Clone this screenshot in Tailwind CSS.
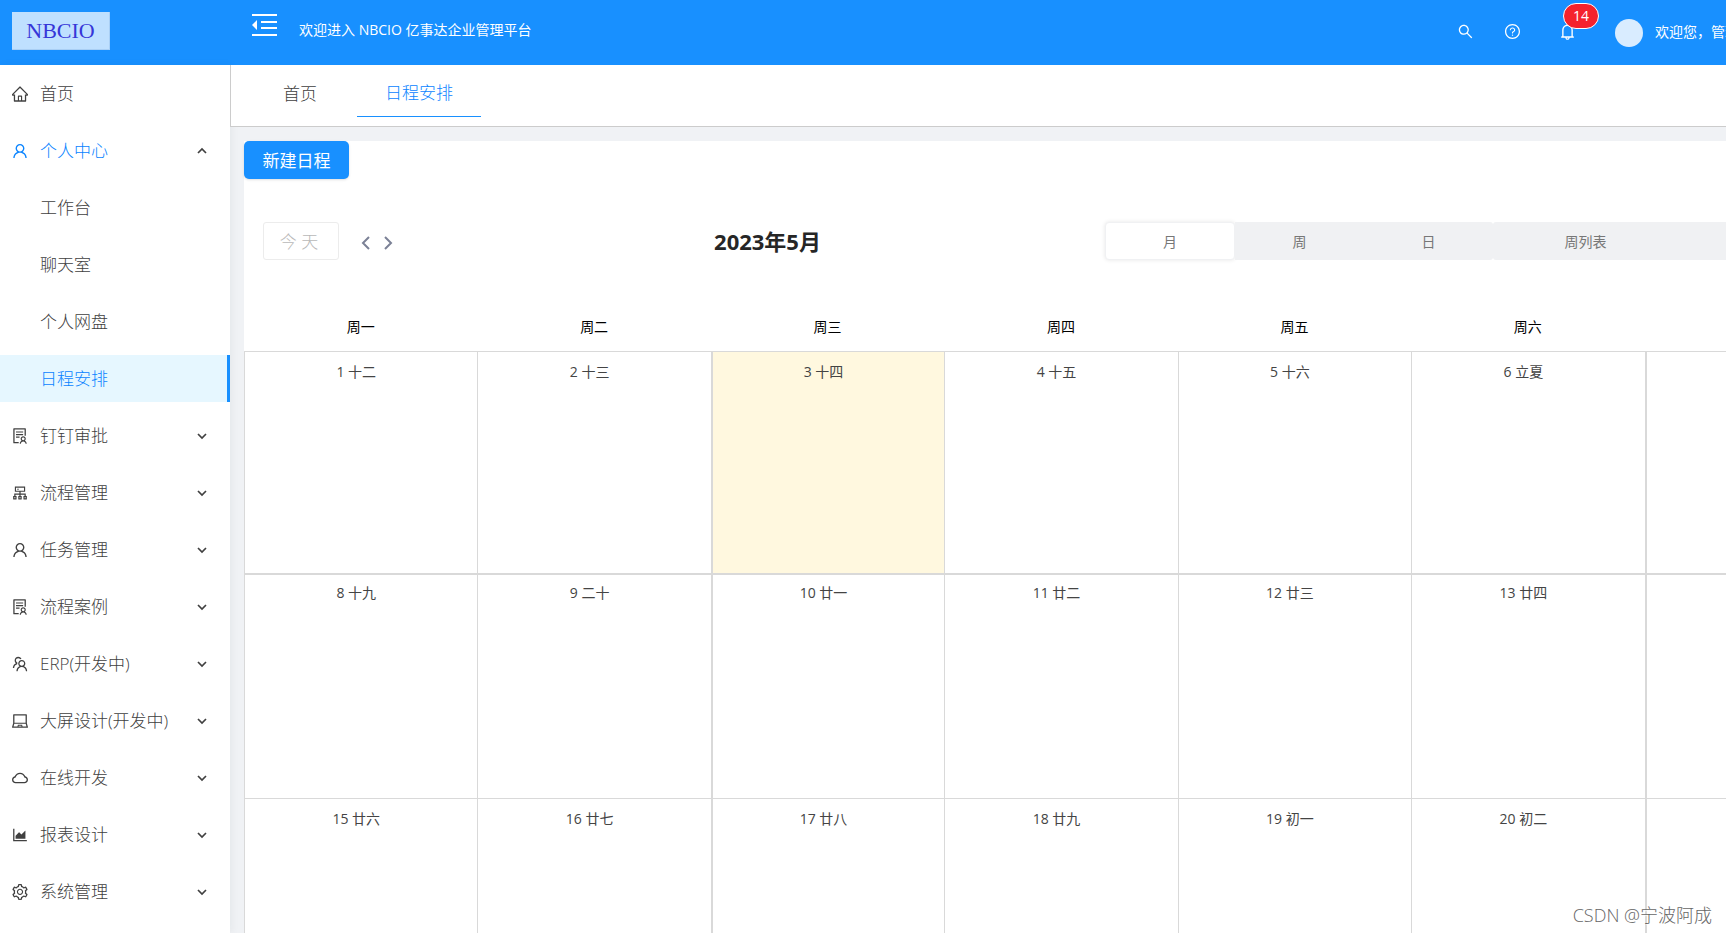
<!DOCTYPE html>
<html lang="zh-CN">
<head>
<meta charset="utf-8">
<title>NBCIO 亿事达企业管理平台</title>
<script src="https://cdn.jsdelivr.net/npm/@tailwindcss/browser@4"></script>
</head>
<body class="relative flex h-screen flex-col overflow-hidden bg-[#f0f2f5] font-['Open_Sans','Noto_Sans_CJK_SC',sans-serif] text-sm text-[#595959]">

<svg class="hidden" aria-hidden="true">
  <symbol id="home" viewBox="64 64 896 896"><path d="M946.5 505L534.6 93.4a31.93 31.93 0 0 0-45.2 0L77.5 505c-12 12-18.8 28.3-18.8 45.3 0 35.3 28.7 64 64 64h43.4V908c0 17.7 14.3 32 32 32h627.800c17.700 0 32-14.300 32-32V614.300h43.400c17 0 33.300-6.700 45.300-18.800 24.900-25 24.900-65.500-.1-90.500zM568 868H456V664h112v204zm217.900-325.700V868H632V640c0-22.100-17.900-40-40-40H432c-22.100 0-40 17.900-40 40v228H238.100V542.300h-96l370-369.700 369.900 369.700h-96.100z"/></symbol>
  <symbol id="user" viewBox="64 64 896 896"><path d="M858.5 763.6a374 374 0 0 0-80.6-119.5 375.63 375.63 0 0 0-119.5-80.6c-.4-.2-.8-.3-1.2-.5C719.5 518 760 444.7 760 362c0-137-111-248-248-248S264 225 264 362c0 82.7 40.5 156 102.8 201.1-.4.2-.8.3-1.2.5-44.8 18.9-85 46-119.5 80.6a375.63 375.63 0 0 0-80.6 119.5A371.7 371.7 0 0 0 136 901.800a8 8 0 0 0 8 8.200h60c4.400 0 7.900-3.500 8-7.800 2-77.200 33-149.500 87.800-204.300 56.700-56.700 132-87.900 212.200-87.900s155.500 31.200 212.200 87.900C779 752.700 810 825 812 902.200c.1 4.400 3.600 7.800 8 7.800h60a8 8 0 0 0 8-8.200c-1-47.800-10.900-94.300-29.500-138.200zM512 534c-45.900 0-89.100-17.900-121.600-50.400S340 407.900 340 362c0-45.900 17.900-89.100 50.400-121.600S466.100 190 512 190s89.100 17.900 121.600 50.400S684 316.100 684 362c0 45.900-17.900 89.100-50.400 121.600S557.900 534 512 534z"/></symbol>
  <symbol id="solution" viewBox="64 64 896 896"><path d="M688 264c0-4.400-3.600-8-8-8H296c-4.400 0-8 3.600-8 8v48c0 4.400 3.600 8 8 8h384c4.400 0 8-3.600 8-8v-48zm-8 136H296c-4.400 0-8 3.600-8 8v48c0 4.400 3.600 8 8 8h384c4.400 0 8-3.600 8-8v-48c0-4.400-3.600-8-8-8zM480 544H296c-4.400 0-8 3.600-8 8v48c0 4.400 3.600 8 8 8h184c4.400 0 8-3.600 8-8v-48c0-4.400-3.600-8-8-8zm-48 308H208V148h560v344c0 4.400 3.600 8 8 8h56c4.400 0 8-3.600 8-8V108c0-17.700-14.300-32-32-32H168c-17.700 0-32 14.300-32 32v784c0 17.700 14.300 32 32 32h264c4.400 0 8-3.600 8-8v-56c0-4.400-3.600-8-8-8zm356.800-74.400c29-26.300 47.200-64.300 47.200-106.600 0-79.500-64.500-144-144-144s-144 64.500-144 144c0 42.300 18.200 80.300 47.200 106.600-57 32.500-96.200 92.700-99.200 162.100-.2 4.500 3.500 8.300 8 8.300h48.100c4.200 0 7.700-3.300 8-7.600C564 871.200 621.700 816 692 816s128 55.200 131.900 124.400c.2 4.200 3.700 7.600 8 7.600H880c4.600 0 8.200-3.800 8-8.300-2.900-69.500-42.200-129.600-99.200-162.100zM692 591c44.200 0 80 35.800 80 80s-35.800 80-80 80-80-35.800-80-80 35.800-80 80-80z"/></symbol>
  <symbol id="cluster" viewBox="64 64 896 896"><path d="M888 680h-54V540H546v-92h238c8.800 0 16-7.200 16-16V168c0-8.800-7.200-16-16-16H240c-8.800 0-16 7.200-16 16v264c0 8.800 7.200 16 16 16h238v92H190v140h-54c-4.400 0-8 3.600-8 8v176c0 4.400 3.600 8 8 8h176c4.400 0 8-3.600 8-8V688c0-4.400-3.600-8-8-8h-54v-72h220v72h-54c-4.400 0-8 3.600-8 8v176c0 4.400 3.600 8 8 8h176c4.400 0 8-3.600 8-8V688c0-4.400-3.600-8-8-8h-54v-72h220v72h-54c-4.400 0-8 3.600-8 8v176c0 4.400 3.600 8 8 8h176c4.400 0 8-3.600 8-8V688c0-4.400-3.600-8-8-8zM256 808h-64v-64h64v64zm288 0h-64v-64h64v64zM288 384V216h448v168H288zm544 424h-64v-64h64v64zM360 300a40 40 0 1 0 80 0 40 40 0 1 0-80 0z"/></symbol>
  <symbol id="team" viewBox="64 64 896 896"><path d="M824.2 699.9a301.55 301.55 0 0 0-86.4-60.4C783.1 602.8 812 546.8 812 484c0-110.8-92.4-201.7-203.2-200-109.1 1.7-197 90.6-197 200 0 62.8 29 118.8 74.2 155.5a300.95 300.95 0 0 0-86.4 60.4C345 754.6 314 826.8 312 903.8a8 8 0 0 0 8 8.2h56c4.3 0 7.9-3.4 8-7.7 1.900-58 25.400-112.300 66.700-153.500A226.620 226.620 0 0 1 612 684c60.900 0 118.200 23.700 161.300 66.800C814.600 792 838 846.300 840 904.300c.1 4.300 3.700 7.700 8 7.700h56a8 8 0 0 0 8-8.200c-2-77-33-149.200-87.800-203.900zM612 612c-34.200 0-66.400-13.300-90.500-37.500a126.860 126.860 0 0 1-37.500-91.800c.3-32.800 13.400-64.500 36.300-88 24-24.600 56.100-38.300 90.400-38.700 33.900-.3 66.800 12.900 91 36.600 24.800 24.300 38.400 56.800 38.400 91.400 0 34.200-13.300 66.300-37.500 90.500A127.300 127.300 0 0 1 612 612zM361.500 510.400c-.9-8.700-1.400-17.500-1.400-26.400 0-15.900 1.500-31.400 4.300-46.500.7-3.600-1.200-7.300-4.500-8.800-13.600-6.100-26.100-14.500-36.900-25.100a127.540 127.540 0 0 1-38.700-95.400c.9-32.100 13.800-62.600 36.300-85.600 24.700-25.300 57.900-39.100 93.200-38.700 31.900.3 62.700 12.600 86 34.400 7.900 7.400 14.700 15.600 20.400 24.400 2 3.100 5.900 4.400 9.300 3.200 17.600-6.100 36.200-10.400 55.300-12.400 5.600-.6 8.800-6.600 6.300-11.600-32.500-64.300-98.900-108.700-175.700-109.900-110.900-1.700-203.300 89.200-203.300 199.900 0 62.800 28.900 118.800 74.200 155.500-31.800 14.700-61.100 35-86.500 60.400-54.800 54.700-85.800 126.900-87.800 204a8 8 0 0 0 8 8.200h56.100c4.300 0 7.900-3.400 8-7.700 1.900-58 25.400-112.300 66.700-153.500 29.400-29.400 65.400-49.800 104.700-59.700 3.900-1 6.500-4.700 6-8.700z"/></symbol>
  <symbol id="laptop" viewBox="64 64 896 896"><path d="M956.900 845.100L896.400 632V168c0-17.700-14.300-32-32-32h-704c-17.700 0-32 14.300-32 32v464L67.900 845.100C60.400 866 75.800 888 98 888h828.800c22.200 0 37.600-22 30.100-42.900zM200.400 208h624v395h-624V208zm228.300 608l8.100-37h150.300l8.100 37H428.700zm224 0l-19.100-86.700c-.8-3.700-4.100-6.300-7.800-6.300H398.200c-3.800 0-7 2.600-7.800 6.300L371.300 816H151l42.300-149h638.200l42.300 149H652.700z"/></symbol>
  <symbol id="cloud" viewBox="64 64 896 896"><path d="M811.400 418.700C765.600 297.900 648.900 212 512.200 212S258.800 297.800 213 418.600C127.300 441.100 64 519.100 64 612c0 110.500 89.500 200 199.900 200h496.200C870.500 812 960 722.500 960 612c0-92.700-63.100-170.700-148.600-193.300zm36.300 281a123.070 123.070 0 0 1-87.600 36.300H263.900c-33.100 0-64.200-12.900-87.600-36.300A123.300 123.300 0 0 1 140 612c0-28 9.100-54.300 26.200-76.300a125.700 125.700 0 0 1 66.100-43.700l37.900-9.900 13.900-36.600c8.600-22.800 20.600-44.100 35.700-63.400a245.600 245.600 0 0 1 52.400-49.900c41.100-28.900 89.500-44.200 140-44.200s98.900 15.300 140 44.200c19.900 14 37.500 30.800 52.400 49.900 15.100 19.300 27.100 40.700 35.700 63.400l13.800 36.500 37.800 10c54.300 14.500 92.100 63.800 92.100 120 0 33.100-12.900 64.300-36.300 87.700z"/></symbol>
  <symbol id="area" viewBox="64 64 896 896"><path d="M888 792H200V168c0-4.400-3.600-8-8-8h-56c-4.400 0-8 3.600-8 8v688c0 4.400 3.600 8 8 8h752c4.400 0 8-3.600 8-8v-56c0-4.400-3.600-8-8-8zm-616-64h536c4.400 0 8-3.600 8-8V284c0-7.200-8.700-10.700-13.700-5.700L592 488.600l-125.400-124a8.030 8.030 0 0 0-11.300 0l-189 189.600a7.870 7.870 0 0 0-2.300 5.600V720c0 4.400 3.600 8 8 8z"/></symbol>
  <symbol id="setting" viewBox="64 64 896 896"><path d="M924.8 625.7l-65.5-56c3.1-19 4.7-38.4 4.7-57.8s-1.6-38.8-4.7-57.8l65.5-56a32.03 32.03 0 0 0 9.3-35.2l-.9-2.6a443.74 443.74 0 0 0-79.7-137.9l-1.8-2.1a32.12 32.12 0 0 0-35.1-9.5l-81.3 28.9c-30-24.6-63.5-44-99.7-57.6l-15.7-85a32.05 32.05 0 0 0-25.8-25.7l-2.7-.5c-52.1-9.4-106.9-9.4-159 0l-2.7.5a32.05 32.05 0 0 0-25.8 25.7l-15.8 85.4a351.86 351.86 0 0 0-99 57.4l-81.9-29.1a32 32 0 0 0-35.1 9.5l-1.8 2.1a446.02 446.02 0 0 0-79.7 137.9l-.9 2.6c-4.5 12.5-.8 26.5 9.3 35.2l66.3 56.6c-3.1 18.8-4.6 38-4.6 57.1 0 19.2 1.5 38.4 4.6 57.1L99 625.5a32.03 32.03 0 0 0-9.3 35.2l.9 2.6c18.1 50.4 44.9 96.9 79.7 137.9l1.8 2.1a32.12 32.12 0 0 0 35.1 9.5l81.9-29.1c29.8 24.5 63.1 43.9 99 57.4l15.8 85.4a32.05 32.05 0 0 0 25.8 25.7l2.7.5a449.4 449.4 0 0 0 159 0l2.7-.5a32.05 32.05 0 0 0 25.8-25.7l15.7-85a350 350 0 0 0 99.7-57.6l81.3 28.9a32 32 0 0 0 35.1-9.5l1.8-2.1c34.8-41.1 61.6-87.5 79.7-137.9l.9-2.6c4.5-12.3.8-26.3-9.3-35zM788.3 465.9c2.5 15.1 3.8 30.6 3.8 46.1s-1.3 31-3.8 46.1l-6.6 40.1 74.7 63.900a370.030 370.030 0 0 1-42.600 73.600L721 702.800l-31.400 25.800c-23.900 19.600-50.500 35-79.300 45.800l-38.100 14.300-17.900 97a377.500 377.500 0 0 1-85 0l-17.900-97.200-37.800-14.500c-28.500-10.800-55-26.200-78.700-45.700l-31.400-25.900-93.400 33.200c-17-22.900-31.200-47.600-42.600-73.600l75.500-64.500-6.500-40c-2.400-14.900-3.700-30.300-3.700-45.500 0-15.300 1.200-30.600 3.700-45.500l6.500-40-75.500-64.500c11.300-26.100 25.600-50.700 42.600-73.600l93.400 33.200 31.400-25.900c23.700-19.500 50.200-34.900 78.700-45.700l37.900-14.300 17.900-97.200c28.100-3.200 56.800-3.200 85 0l17.900 97 38.100 14.300c28.700 10.800 55.400 26.200 79.300 45.800l31.400 25.800 92.800-32.900c17 22.900 31.200 47.600 42.600 73.600L781.800 426l6.500 39.900zM512 326c-97.200 0-176 78.800-176 176s78.800 176 176 176 176-78.800 176-176-78.800-176-176-176zm79.200 255.200A111.600 111.600 0 0 1 512 614c-29.900 0-58-11.700-79.200-32.800A111.600 111.600 0 0 1 400 502c0-29.900 11.700-58 32.800-79.200C454 401.600 482.100 390 512 390c29.900 0 58 11.600 79.200 32.800A111.600 111.600 0 0 1 624 502c0 29.900-11.700 58-32.800 79.200z"/></symbol>
  <symbol id="search" viewBox="64 64 896 896"><path d="M909.6 854.5L649.9 594.8C690.2 542.7 712 479 712 412c0-80.2-31.3-155.4-87.9-212.1-56.6-56.7-132-87.9-212.1-87.9s-155.5 31.3-212.1 87.9C143.2 256.5 112 331.8 112 412c0 80.1 31.3 155.5 87.9 212.1C256.5 680.8 331.8 712 412 712c67 0 130.6-21.8 182.7-62l259.700 259.600a8.200 8.200 0 0 0 11.600 0l43.600-43.500a8.200 8.200 0 0 0 0-11.600zM570.400 570.400C528 612.700 471.800 636 412 636s-116-23.300-158.400-65.600C211.300 528 188 471.800 188 412s23.300-116.100 65.600-158.400C296 211.300 352.200 188 412 188s116.100 23.200 158.400 65.600S636 352.200 636 412s-23.300 116.100-65.600 158.400z"/></symbol>
  <symbol id="question" viewBox="64 64 896 896"><path d="M512 64C264.600 64 64 264.600 64 512s200.600 448 448 448 448-200.600 448-448S759.400 64 512 64zm0 820c-205.400 0-372-166.600-372-372s166.600-372 372-372 372 166.600 372 372-166.600 372-372 372z"/><path d="M623.600 316.700C593.600 290.400 554 276 512 276s-81.600 14.500-111.600 40.700C369.200 344 352 380.700 352 420v7.600c0 4.400 3.600 8 8 8h48c4.400 0 8-3.600 8-8V420c0-44.100 43.100-80 96-80s96 35.900 96 80c0 31.100-22 59.600-56.100 72.700-21.200 8.100-39.200 22.300-52.100 40.900-13.100 19-19.900 41.800-19.900 64.900V620c0 4.400 3.600 8 8 8h48c4.400 0 8-3.600 8-8v-22.700a48.300 48.300 0 0 1 30.900-44.800c59-22.700 97.100-74.700 97.100-132.500.1-39.300-17.100-76-48.300-103.300zM472 732a40 40 0 1 0 80 0 40 40 0 1 0-80 0z"/></symbol>
  <symbol id="bell" viewBox="64 64 896 896"><path d="M816 768h-24V428c0-141.100-104.300-257.700-240-277.100V112c0-22.100-17.900-40-40-40s-40 17.900-40 40v38.900c-135.700 19.400-240 136-240 277.100v340h-24c-17.700 0-32 14.300-32 32v32c0 4.400 3.600 8 8 8h216c0 61.800 50.200 112 112 112s112-50.200 112-112h216c4.400 0 8-3.600 8-8v-32c0-17.700-14.300-32-32-32zM512 888c-26.500 0-48-21.500-48-48h96c0 26.500-21.500 48-48 48zM304 768V428c0-55.600 21.600-107.800 60.900-147.100S456.400 220 512 220c55.600 0 107.800 21.600 147.100 60.900S720 372.400 720 428v340H304z"/></symbol>
  <symbol id="down" viewBox="0 0 10 10"><path d="M1 3l4 4 4-4" fill="none" stroke="currentColor" stroke-width="1.7"/></symbol>
  <symbol id="up" viewBox="0 0 10 10"><path d="M1 7l4-4 4 4" fill="none" stroke="currentColor" stroke-width="1.7"/></symbol>
</svg>

<header class="flex h-[65px] shrink-0 items-center bg-[#1890ff] text-white">
  <div class="w-[230px] shrink-0 pl-3">
    <a href="#" class="mb-1 flex h-[38px] w-[98px] items-center justify-center border-r border-b border-[#a9cff5] bg-[#bfe0ff] pt-[2px] font-['Liberation_Serif',serif] text-[22px] text-[#3636d8]">NBCIO</a>
  </div>
  <button type="button" aria-label="收起菜单" class="mb-4 ml-[22px]">
    <svg class="block h-[22px] w-[25px]" viewBox="0 0 25 22" fill="currentColor"><path d="M0 0h25v2H0zM9 7h16v2H9zM9 13h16v2H9zM0 20h25v2H0zM0 11l5-5v10z"/></svg>
  </button>
  <h1 class="mb-[6px] ml-[22px] whitespace-nowrap">欢迎进入 NBCIO 亿事达企业管理平台</h1>
  <div class="mb-[2px] ml-auto flex shrink-0 items-center">
    <button type="button" aria-label="搜索"><svg class="block h-[15px] w-[15px]" fill="currentColor"><use href="#search"/></svg></button>
    <button type="button" aria-label="帮助" class="ml-8"><svg class="block h-[15px] w-[15px]" fill="currentColor"><use href="#question"/></svg></button>
    <button type="button" aria-label="消息" class="relative ml-[39px]"><svg class="block h-[17px] w-[17px]" fill="currentColor"><use href="#bell"/></svg>
      <span class="absolute -top-5 left-1 flex h-[26px] w-9 items-center justify-center rounded-full border border-white bg-[#f5222d]">14</span></button>
    <span class="mt-[2px] ml-[39px] h-7 w-7 rounded-full bg-[#d9ecff]"></span>
    <span class="ml-3 w-[71px] overflow-hidden whitespace-nowrap">欢迎您，管理员</span>
  </div>
</header>

<div class="flex min-h-0 flex-1">
  <nav class="z-10 w-[230px] shrink-0 bg-white pt-[5px] text-[17px] font-light text-[#404040] shadow-[2px_0_8px_#1d23290d]">
    <ul class="flex flex-col gap-[10px]">
      <li><a href="#" class="flex h-[47px] items-center gap-3 pl-3"><svg class="h-4 w-4" fill="currentColor"><use href="#home"/></svg><span class="pt-[2px]">首页</span></a></li>
      <li><button type="button" aria-expanded="true" class="flex h-[47px] w-full items-center gap-3 pr-[23px] pl-3 text-[#0a84ff]"><svg class="h-4 w-4" fill="currentColor"><use href="#user"/></svg><span class="pt-[2px]">个人中心</span><svg class="ml-auto h-[10px] w-[10px] text-[#404040]"><use href="#up"/></svg></button></li>
      <li><a href="#" class="flex h-[47px] items-center pt-[2px] pl-10">工作台</a></li>
      <li><a href="#" class="flex h-[47px] items-center pt-[2px] pl-10">聊天室</a></li>
      <li><a href="#" class="flex h-[47px] items-center pt-[2px] pl-10">个人网盘</a></li>
      <li><a href="#" aria-current="page" class="flex h-[47px] items-center border-r-3 border-[#1890ff] bg-[#e6f7ff] pt-[2px] pl-10 text-[#0a84ff]">日程安排</a></li>
      <li><button type="button" class="flex h-[47px] w-full items-center gap-3 pr-[23px] pl-3"><svg class="h-4 w-4" fill="currentColor"><use href="#solution"/></svg><span class="pt-[2px]">钉钉审批</span><svg class="ml-auto h-[10px] w-[10px]"><use href="#down"/></svg></button></li>
      <li><button type="button" class="flex h-[47px] w-full items-center gap-3 pr-[23px] pl-3"><svg class="h-4 w-4" fill="currentColor"><use href="#cluster"/></svg><span class="pt-[2px]">流程管理</span><svg class="ml-auto h-[10px] w-[10px]"><use href="#down"/></svg></button></li>
      <li><button type="button" class="flex h-[47px] w-full items-center gap-3 pr-[23px] pl-3"><svg class="h-4 w-4" fill="currentColor"><use href="#user"/></svg><span class="pt-[2px]">任务管理</span><svg class="ml-auto h-[10px] w-[10px]"><use href="#down"/></svg></button></li>
      <li><button type="button" class="flex h-[47px] w-full items-center gap-3 pr-[23px] pl-3"><svg class="h-4 w-4" fill="currentColor"><use href="#solution"/></svg><span class="pt-[2px]">流程案例</span><svg class="ml-auto h-[10px] w-[10px]"><use href="#down"/></svg></button></li>
      <li><button type="button" class="flex h-[47px] w-full items-center gap-3 pr-[23px] pl-3"><svg class="h-4 w-4" fill="currentColor"><use href="#team"/></svg><span class="pt-[2px]">ERP(开发中)</span><svg class="ml-auto h-[10px] w-[10px]"><use href="#down"/></svg></button></li>
      <li><button type="button" class="flex h-[47px] w-full items-center gap-3 pr-[23px] pl-3"><svg class="h-4 w-4" fill="currentColor"><use href="#laptop"/></svg><span class="pt-[2px]">大屏设计(开发中)</span><svg class="ml-auto h-[10px] w-[10px]"><use href="#down"/></svg></button></li>
      <li><button type="button" class="flex h-[47px] w-full items-center gap-3 pr-[23px] pl-3"><svg class="h-4 w-4" fill="currentColor"><use href="#cloud"/></svg><span class="pt-[2px]">在线开发</span><svg class="ml-auto h-[10px] w-[10px]"><use href="#down"/></svg></button></li>
      <li><button type="button" class="flex h-[47px] w-full items-center gap-3 pr-[23px] pl-3"><svg class="h-4 w-4" fill="currentColor"><use href="#area"/></svg><span class="pt-[2px]">报表设计</span><svg class="ml-auto h-[10px] w-[10px]"><use href="#down"/></svg></button></li>
      <li><button type="button" class="flex h-[47px] w-full items-center gap-3 pr-[23px] pl-3"><svg class="h-4 w-4" fill="currentColor"><use href="#setting"/></svg><span class="pt-[2px]">系统管理</span><svg class="ml-auto h-[10px] w-[10px]"><use href="#down"/></svg></button></li>
    </ul>
  </nav>

  <div class="z-20 flex min-w-0 flex-1 flex-col">
    <div class="flex h-[62px] shrink-0 border-b border-l border-[#ccc] bg-white pl-[22px] text-[17px] font-light text-[#404040]">
      <a href="#" class="flex h-[52px] items-center px-[30px] pt-[6px]">首页</a>
      <a href="#" class="ml-[10px] flex h-[52px] items-center border-b border-[#1890ff] px-7 pt-[6px] text-[#0a84ff]">日程安排</a>
    </div>

    <main class="mt-[14px] ml-[14px] w-[calc(100vw-92px)] flex-1 bg-white">
      <button type="button" class="flex h-[38px] w-[105px] items-center justify-center rounded-[5px] bg-[#1890ff] pt-[2px] text-[17px] text-white shadow-sm">新建日程</button>

      <div class="mt-[43px] flex h-[38px] items-center justify-between px-[19px]">
        <div class="flex w-[167px] items-center">
          <button type="button" disabled class="h-[38px] w-[76px] rounded-[3px] border border-[#ececec] pt-[3px] pr-1 text-[17px] font-light text-[#b8b8b8]">今 天</button>
          <button type="button" aria-label="上一月" class="mt-1 ml-[22px]"><svg class="block h-[14px] w-[9px] text-[#7b8196]" viewBox="0 0 9 14"><path d="M8 1L2 7l6 6" fill="none" stroke="currentColor" stroke-width="2"/></svg></button>
          <button type="button" aria-label="下一月" class="mt-1 ml-[14px]"><svg class="block h-[14px] w-[9px] text-[#7b8196]" viewBox="0 0 9 14"><path d="M1 1l6 6-6 6" fill="none" stroke="currentColor" stroke-width="2"/></svg></button>
        </div>
        <h2 class="pt-[2px] text-[22px] font-bold text-[#262626]">2023年5月</h2>
        <div class="flex h-[38px] text-[#777]">
          <button type="button" class="w-[130px] rounded-[4px] border border-[#f0f1f3] bg-white pt-[2px] shadow-[0_0_4px_#0000001a]">月</button>
          <button type="button" class="w-[129px] bg-[#f0f1f3] pt-[2px]">周</button>
          <button type="button" class="w-[129px] rounded-r-[3px] bg-[#f0f1f3] pt-[2px]">日</button>
          <button type="button" class="w-[185px] rounded-l-[3px] bg-[#f0f1f3] pt-[2px]">周列表</button>
          <button type="button" class="w-[181px] rounded-r-[3px] bg-[#f0f1f3] pt-[2px]">日列表</button>
        </div>
      </div>

      <table class="mt-[42px] w-full table-fixed border-separate border-spacing-0 text-center text-[#444]">
        <thead>
          <tr class="h-[49px] text-black">
            <th class="font-normal">周一</th><th class="font-normal">周二</th><th class="font-normal">周三</th><th class="font-normal">周四</th><th class="font-normal">周五</th><th class="font-normal">周六</th><th class="font-normal">周日</th>
          </tr>
        </thead>
        <tbody>
          <tr class="h-[222px] align-top">
            <td class="border-t border-l border-[#d9d9d9] pt-[10px] pr-[10px]">1 十二</td>
            <td class="border-t border-l border-[#d9d9d9] pt-[10px] pr-[10px]">2 十三</td>
            <td class="border-t border-l-2 border-[#d9d9d9] bg-[#fff8df] pt-[10px] pr-[10px]">3 十四</td>
            <td class="border-t border-l border-[#d9d9d9] pt-[10px] pr-[10px]">4 十五</td>
            <td class="border-t border-l border-[#d9d9d9] pt-[10px] pr-[10px]">5 十六</td>
            <td class="border-t border-l border-[#d9d9d9] pt-[10px] pr-[10px]">6 立夏</td>
            <td class="border-t border-l-2 border-[#d9d9d9] pt-[10px] pr-[10px]">7 十八</td>
          </tr>
          <tr class="h-[225px] align-top">
            <td class="border-t-2 border-l border-[#d9d9d9] pt-2 pr-[10px]">8 十九</td>
            <td class="border-t-2 border-l border-[#d9d9d9] pt-2 pr-[10px]">9 二十</td>
            <td class="border-t-2 border-l-2 border-[#d9d9d9] pt-2 pr-[10px]">10 廿一</td>
            <td class="border-t-2 border-l border-[#d9d9d9] pt-2 pr-[10px]">11 廿二</td>
            <td class="border-t-2 border-l border-[#d9d9d9] pt-2 pr-[10px]">12 廿三</td>
            <td class="border-t-2 border-l border-[#d9d9d9] pt-2 pr-[10px]">13 廿四</td>
            <td class="border-t-2 border-l-2 border-[#d9d9d9] pt-2 pr-[10px]">14 廿五</td>
          </tr>
          <tr class="h-[225px] align-top">
            <td class="border-t border-l border-[#d9d9d9] pt-[10px] pr-[10px]">15 廿六</td>
            <td class="border-t border-l border-[#d9d9d9] pt-[10px] pr-[10px]">16 廿七</td>
            <td class="border-t border-l-2 border-[#d9d9d9] pt-[10px] pr-[10px]">17 廿八</td>
            <td class="border-t border-l border-[#d9d9d9] pt-[10px] pr-[10px]">18 廿九</td>
            <td class="border-t border-l border-[#d9d9d9] pt-[10px] pr-[10px]">19 初一</td>
            <td class="border-t border-l border-[#d9d9d9] pt-[10px] pr-[10px]">20 初二</td>
            <td class="border-t border-l-2 border-[#d9d9d9] pt-[10px] pr-[10px]">21 小满</td>
          </tr>
        </tbody>
      </table>
    </main>
  </div>
</div>

<p class="absolute right-[14px] bottom-1 z-30 text-[18px] font-light text-[#666] [text-shadow:1px_1px_1px_#fff]">CSDN @宁波阿成</p>
</body>
</html>
